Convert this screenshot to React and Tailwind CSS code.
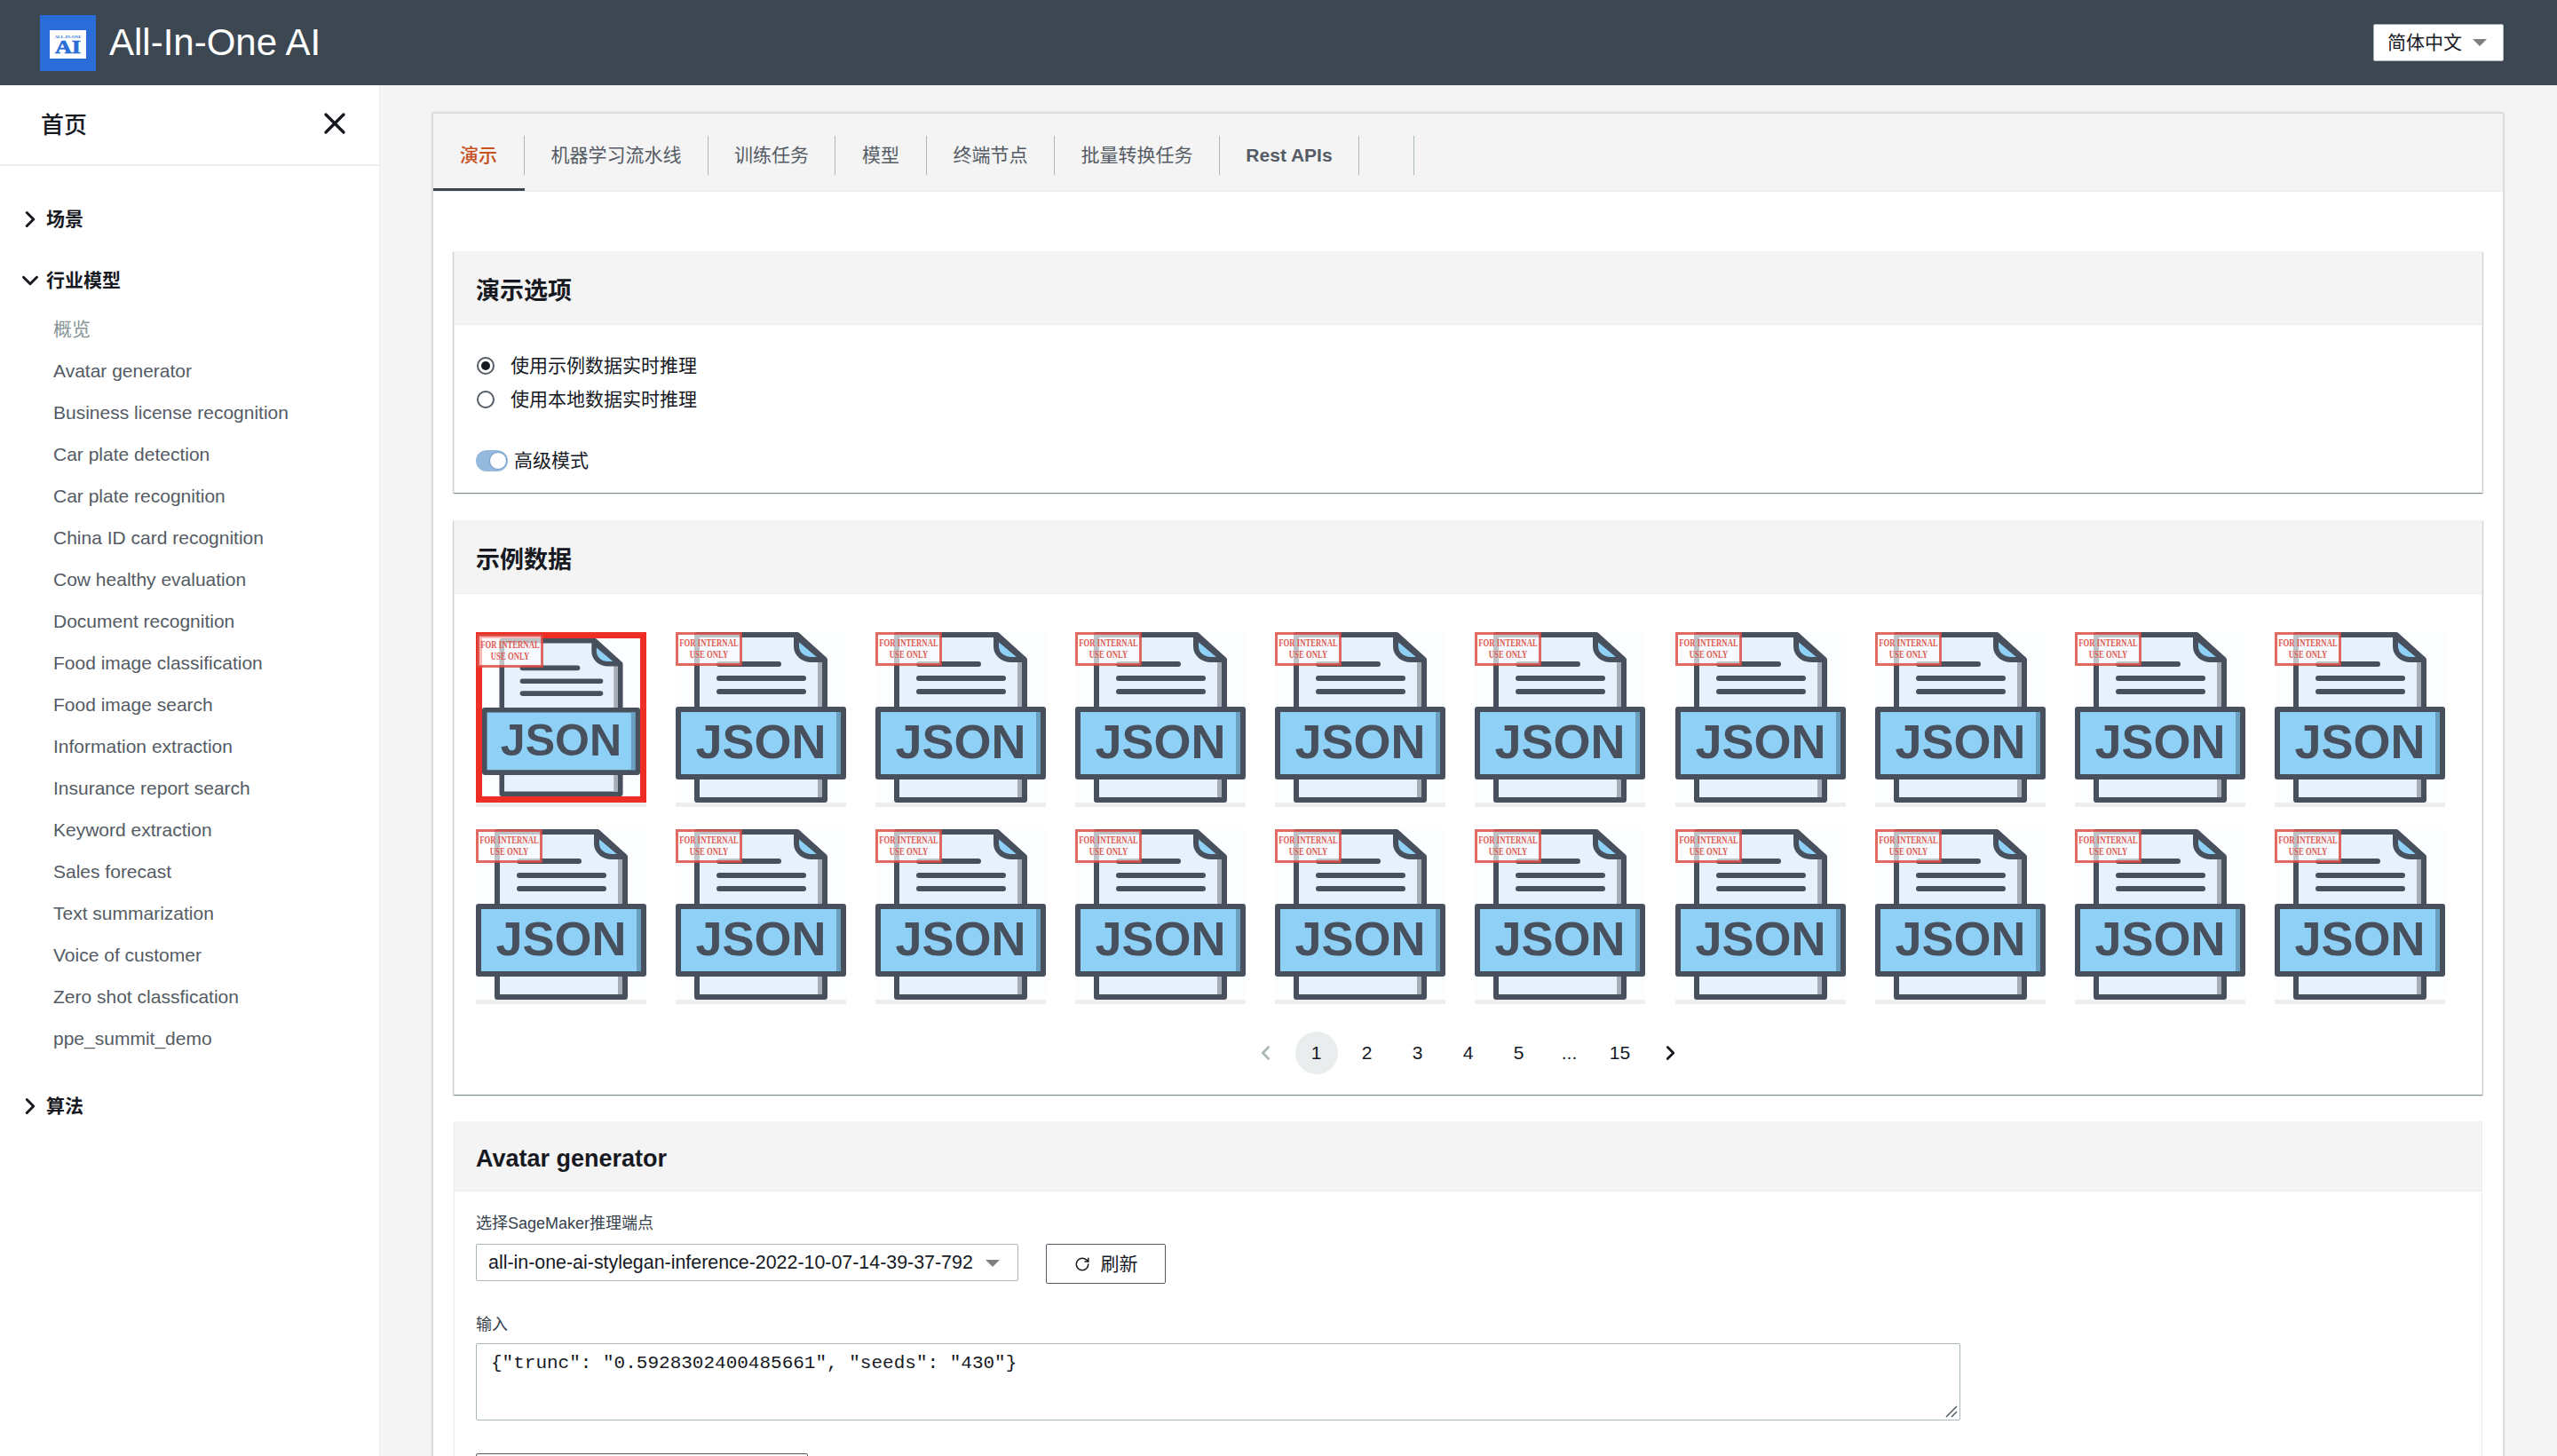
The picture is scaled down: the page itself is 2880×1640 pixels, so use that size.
import React from 'react';
import { ChevronRight, ChevronDown, ChevronLeft, X, RotateCw } from 'lucide-react';

const cjk = "font-['Liberation_Sans','Noto_Sans_CJK_SC',sans-serif]";

const models = [
  '概览', 'Avatar generator', 'Business license recognition', 'Car plate detection', 'Car plate recognition',
  'China ID card recognition', 'Cow healthy evaluation', 'Document recognition', 'Food image classification',
  'Food image search', 'Information extraction', 'Insurance report search', 'Keyword extraction', 'Sales forecast',
  'Text summarization', 'Voice of customer', 'Zero shot classfication', 'ppe_summit_demo',
];

const tabs = [
  { label: '演示', w: 'w-[103px]', active: true },
  { label: '机器学习流水线', w: 'w-[207px]' },
  { label: '训练任务', w: 'w-[143px]' },
  { label: '模型', w: 'w-[103px]' },
  { label: '终端节点', w: 'w-[144px]' },
  { label: '批量转换任务', w: 'w-[186px]' },
  { label: 'Rest APIs', w: 'w-[157px]', bold: true },
  { label: '', w: 'w-[62px]' },
];

const cardShadow = 'shadow-[0_1px_1px_rgba(0,28,36,0.3),1px_1px_1px_rgba(0,28,36,0.15),-1px_1px_1px_rgba(0,28,36,0.15)]';

const Logo = () => (
  <svg viewBox="0 0 63 63" className="w-[63px] h-[63px] shrink-0">
    <rect width="63" height="63" fill="#2a6dd9" />
    <rect x="11" y="17" width="41" height="32" fill="#ffffff" />
    <text x="31.5" y="25.5" textAnchor="middle" textLength="30" lengthAdjust="spacingAndGlyphs" fontFamily="Liberation Serif" fontWeight="700" fontSize="4.5" fill="#2a6dd9">ALL-IN-ONE</text>
    <text x="31.5" y="43" textAnchor="middle" textLength="29" lengthAdjust="spacingAndGlyphs" fontFamily="Liberation Serif" fontWeight="700" fontSize="22" fill="#2a6dd9" stroke="#2a6dd9" strokeWidth="0.7">AI</text>
  </svg>
);

const JsonIcon = () => (
  <svg viewBox="0 0 192 192" className="block w-full h-full">
    <rect width="192" height="192" fill="#fcfdff" />
    <path d="M24 3H137L168 31V189H24Z" fill="#e6f1fc" stroke="#47505c" strokeWidth="6" strokeLinejoin="round" />
    <rect x="160" y="32" width="5" height="154" fill="#a6adb7" />
    <path d="M136 5V16C136 25 144 31 153 31H167Z" fill="#8fd1f6" stroke="#47505c" strokeWidth="6" strokeLinejoin="round" />
    <path d="M49 36H116M49 52H144M49 67H144" stroke="#47505c" strokeWidth="6" strokeLinecap="round" />
    <rect x="3" y="87" width="186" height="76" fill="#8fd1f6" stroke="#47505c" strokeWidth="6" strokeLinejoin="round" />
    <rect x="181" y="90" width="5" height="70" fill="#6a9fc0" />
    <text x="96" y="142" textAnchor="middle" fontFamily="Liberation Sans" fontWeight="700" fontSize="54" fill="#47505c">JSON</text>
  </svg>
);

const Stamp = ({ selected }) => (
  <svg viewBox="0 0 75 38" className={`absolute w-[75px] h-[38px] ${selected ? 'left-[1px] top-[2px]' : 'left-0 top-0'}`}>
    <rect x="1.5" y="1.5" width="72" height="35" fill="#ffffff" fillOpacity="0.65" stroke="#d9453c" strokeOpacity="0.8" strokeWidth="3" />
    <text transform="translate(37.5 16) scale(1 1.35)" textAnchor="middle" fontFamily="Liberation Serif" fontWeight="700" fontSize="8.7" fill="#dd5a52">FOR INTERNAL</text>
    <text transform="translate(37.5 29) scale(1 1.35)" textAnchor="middle" fontFamily="Liberation Serif" fontWeight="700" fontSize="8.7" fill="#dd5a52">USE ONLY</text>
  </svg>
);

const Thumb = ({ selected }) => (
  <div className="w-[192px]">
    <div className={selected ? 'relative h-[192px] border-[7px] border-[#ee2e24] bg-white' : 'relative h-[192px]'}>
      <JsonIcon />
      <div className={selected ? 'absolute -left-[7px] -top-[7px]' : 'absolute left-0 top-0'}>
        <Stamp selected={selected} />
      </div>
    </div>
    <div className="h-[5px] bg-[#eeeeee]" />
  </div>
);

const Radio = ({ checked, label }) => (
  <div className="flex items-center h-[38px]">
    <span className="w-[20px] h-[20px] rounded-full border-2 border-[#545b64] flex items-center justify-center mr-[18px] ml-[1px]">
      {checked && <span className="w-[10px] h-[10px] rounded-full bg-[#16191f]" />}
    </span>
    <span className="text-[21px] text-[#16191f]">{label}</span>
  </div>
);

const CardHead = ({ title, h, pt }) => (
  <div className={`${h} ${pt} bg-[#f4f4f4] border-b border-[#eaeded] flex items-center px-[24px]`}>
    <span className="text-[27px] font-bold text-[#16191f]">{title}</span>
  </div>
);

const Caret = () => (
  <span className="w-0 h-0 border-x-[8px] border-x-transparent border-t-[8px] border-t-[#7f7f7f]" />
);

const NavGroup = ({ label, open, className }) => {
  const Icon = open ? ChevronDown : ChevronRight;
  return (
    <div className={`flex items-center h-[36px] pl-[19px] ${className || ''}`}>
      <Icon size={30} strokeWidth={2.4} className="text-[#16191f]" />
      <span className="ml-[3px] text-[21px] font-bold text-[#16191f]">{label}</span>
    </div>
  );
};

export default function App() {
  return (
    <div className={`h-screen overflow-hidden flex flex-col bg-[#f4f4f4] ${cjk}`}>
      <header className="h-[96px] shrink-0 bg-[#3c4752] flex items-center justify-between pl-[45px] pr-[60px]">
        <div className="flex items-center">
          <Logo />
          <span className="ml-[15px] text-[42px] text-white -mt-[2px]">All-In-One AI</span>
        </div>
        <div className="w-[147px] h-[42px] bg-white rounded-[2px] border border-[#aab7b8] flex items-center pl-[15px] gap-[12px]">
          <span className="text-[21px] text-[#16191f]">简体中文</span>
          <Caret />
        </div>
      </header>

      <div className="flex-1 flex min-h-0">
        <aside className="w-[428px] shrink-0 bg-white border-r border-[#eaeded]">
          <div className="h-[91px] border-b-2 border-[#eaeded] flex items-center justify-between pl-[46px] pr-[30px]">
            <span className="text-[26px] font-medium text-[#16191f] mt-[2px]">首页</span>
            <X size={40} strokeWidth={2} className="text-[#16191f] -mt-[3px]" />
          </div>
          <div className="pt-[42px]">
            <NavGroup label="场景" />
            <NavGroup label="行业模型" open className="mt-[33px]" />
            <ul className="pl-[60px] mt-[13px]">
              {models.map((m, i) => (
                <li key={m} className={`h-[47px] flex items-center text-[21px] ${i === 0 ? 'text-[#879596]' : 'text-[#545b64]'}`}>{m}</li>
              ))}
            </ul>
            <NavGroup label="算法" className="mt-[35px]" />
          </div>
        </aside>

        <main className="flex-1 min-w-0 pl-[59px] pr-[60px] pt-[31px]">
          <div className="bg-white border-x border-t border-[#d5dbdb] shadow-[0_0_2px_rgba(0,28,36,0.3)] h-[1600px]">
            <div className="h-[88px] bg-[#f4f4f4] border-b border-[#eaeded] flex pt-[25px]">
              {tabs.map((t) => (
                <div key={t.label || 'blank'} className={`${t.w} h-[62px] relative`}>
                  <div className={`h-[44px] flex items-center justify-center text-[21px] border-r border-[#aab7b8] ${t.active ? 'text-[#c7511f] font-medium' : 'text-[#545b64]'} ${t.bold ? 'font-bold' : ''}`}>
                    {t.label}
                  </div>
                  {t.active && <div className="absolute bottom-0 left-0 right-0 h-[3px] bg-[#3c4752]" />}
                </div>
              ))}
            </div>

            <div className="px-[23px] pt-[67px]">
              <section className={`bg-white border-x border-[#eaeded] ${cardShadow} h-[272px]`}>
                <CardHead title="演示选项" h="h-[83px]" pt="pt-[8px]" />
                <div className="px-[24px] pt-[27px]">
                  <Radio checked label="使用示例数据实时推理" />
                  <Radio label="使用本地数据实时推理" />
                  <div className="flex items-center mt-[34px]">
                    <span className="w-[36px] h-[24px] rounded-full bg-[#94b9dc] relative">
                      <span className="absolute right-[1px] top-[2px] w-[20px] h-[20px] rounded-full bg-white border border-[#6f9cc7]" />
                    </span>
                    <span className="ml-[7px] text-[21px] text-[#16191f]">高级模式</span>
                  </div>
                </div>
              </section>

              <section className={`mt-[31px] bg-white border-x border-[#eaeded] ${cardShadow} h-[647px]`}>
                <CardHead title="示例数据" h="h-[83px]" pt="pt-[8px]" />
                <div className="px-[24px] pt-[43px]">
                  <div className="grid grid-cols-[repeat(10,192px)] gap-x-[33.1px] gap-y-[25px]">
                    {Array.from({ length: 20 }, (_, i) => <Thumb key={i} selected={i === 0} />)}
                  </div>
                  <div className="flex items-center justify-center mt-[31px] text-[21px] text-[#16191f]">
                    <ChevronLeft size={26} strokeWidth={2.4} className="text-[#aab7b8] w-[57px]" />
                    <span className="w-[57px] flex justify-center">
                      <span className="w-[48px] h-[48px] rounded-full bg-[#eaeded] flex items-center justify-center">1</span>
                    </span>
                    {['2', '3', '4', '5', '...', '15'].map((p) => (
                      <span key={p} className="w-[57px] text-center">{p}</span>
                    ))}
                    <ChevronRight size={26} strokeWidth={2.6} className="text-[#16191f] w-[57px]" />
                  </div>
                </div>
              </section>

              <section className="mt-[30px] bg-white border-x border-[#eaeded] h-[500px]">
                <CardHead title="Avatar generator" h="h-[79px]" pt="pt-[6px]" />
                <div className="px-[24px] pt-[24px]">
                  <div className="text-[18px] leading-[24px] text-[#37424d]">选择SageMaker推理端点</div>
                  <div className="flex mt-[11px] gap-[31px]">
                    <div className="w-[611px] h-[42px] border border-[#aab7b8] rounded-[2px] flex items-center justify-between pl-[13px] pr-[20px] pt-[1px] text-[21.4px] text-[#16191f]">
                      <span className="whitespace-nowrap">all-in-one-ai-stylegan-inference-2022-10-07-14-39-37-792</span>
                      <Caret />
                    </div>
                    <div className="w-[135px] h-[45px] border border-[#545b64] rounded-[2px] flex items-center justify-center gap-[12px] text-[21px] text-[#16191f]">
                      <RotateCw size={18} strokeWidth={2} className="text-[#16191f]" />
                      <span>刷新</span>
                    </div>
                  </div>
                  <div className="text-[18px] leading-[24px] text-[#37424d] mt-[34px]">输入</div>
                  <div className="w-[1672px] h-[87px] mt-[9px] border border-[#aab7b8] rounded-[2px] px-[16px] pt-[6px] font-['Liberation_Mono',monospace] text-[21px] text-[#16191f] whitespace-pre relative">
                    {'{"trunc": "0.5928302400485661", "seeds": "430"}'}
                    <svg viewBox="0 0 14 14" className="absolute right-[2px] bottom-[2px] w-[14px] h-[14px]">
                      <path d="M13 1L1 13M13 7L7 13" stroke="#545b64" strokeWidth="1.5" />
                    </svg>
                  </div>
                  <div className="w-[374px] h-[45px] mt-[37px] border border-[#545b64] rounded-[2px]" />
                </div>
              </section>
            </div>
          </div>
        </main>
      </div>
    </div>
  );
}
